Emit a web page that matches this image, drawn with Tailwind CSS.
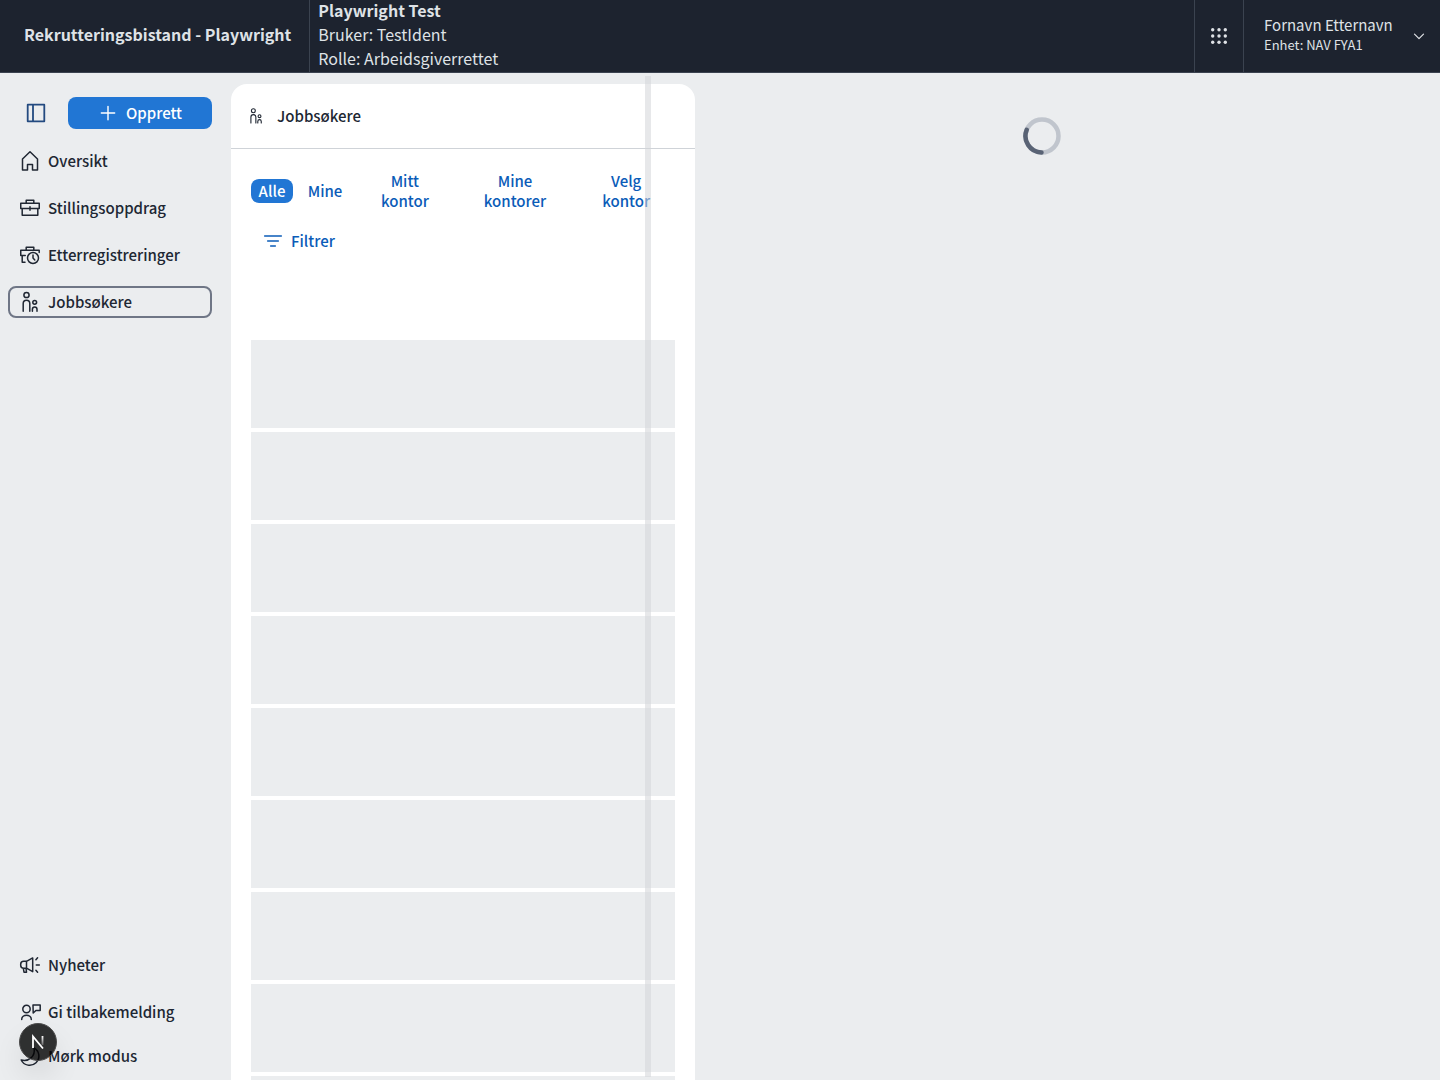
<!DOCTYPE html>
<html lang="nb">
<head>
<meta charset="utf-8">
<title>Rekrutteringsbistand</title>
<meta name="viewport" content="width=device-width, initial-scale=1">
<script src="https://cdn.jsdelivr.net/npm/@tailwindcss/browser@4"></script>
</head>
<body class="flex h-screen flex-col overflow-hidden bg-[#ebedef] font-['Noto_Sans_CJK_SC','Noto_Sans',sans-serif] text-[15px] leading-5 text-[#202733]">
<svg class="hidden">
  <defs>
    <symbol id="people" viewBox="0 0 24 24" fill="none" stroke="currentColor" stroke-width="1.5" stroke-linecap="round" stroke-linejoin="round">
      <circle cx="8.5" cy="5" r="2.6"/><path d="M5.2 21.200V13.500a3.300 3.300 0 0 1 6.600 0v7.700"/><circle cx="16.700" cy="12.300" r="1.900"/><path d="M14.400 21.200v-2a2.300 2.300 0 0 1 4.600 0v2"/>
    </symbol>
  </defs>
</svg>

<header class="flex h-[73px] shrink-0 border-b border-[#3b4350] bg-[#1d232f] text-[#dfe2e6]">
  <a href="#" class="flex items-center border-r border-[#3b4350] pr-[18px] pb-1 pl-6 text-[16px] leading-6 font-bold">Rekrutteringsbistand - Playwright</a>
  <div class="pl-2 text-[16px] leading-6">
    <p class="-mt-[2px] font-bold">Playwright Test</p>
    <p>Bruker: TestIdent</p>
    <p>Rolle: Arbeidsgiverrettet</p>
  </div>
  <button aria-label="Systemer" class="ml-auto flex w-[50px] items-center justify-center border-x border-[#3b4350]">
    <svg class="size-6" viewBox="0 0 24 24" fill="currentColor"><circle cx="5.7" cy="5.7" r="1.7"/><circle cx="12" cy="5.7" r="1.7"/><circle cx="18.3" cy="5.7" r="1.7"/><circle cx="5.7" cy="12" r="1.7"/><circle cx="12" cy="12" r="1.7"/><circle cx="18.3" cy="12" r="1.7"/><circle cx="5.7" cy="18.3" r="1.7"/><circle cx="12" cy="18.3" r="1.7"/><circle cx="18.3" cy="18.3" r="1.7"/></svg>
  </button>
  <button class="flex w-[196px] items-center justify-between pr-3 pl-5 text-left">
    <span class="pb-[2px]"><span class="block text-[15px] leading-5">Fornavn Etternavn</span><span class="block text-[13px] leading-5">Enhet: NAV FYA1</span></span>
    <svg class="size-[18px]" viewBox="0 0 24 24" fill="none" stroke="currentColor" stroke-width="1.6" stroke-linecap="round" stroke-linejoin="round"><path d="m6 9.5 6 6 6-6"/></svg>
  </button>
</header>

<div class="flex min-h-0 flex-1">
  <nav class="flex w-[231px] shrink-0 flex-col pt-6 pr-[19px] pb-2 pl-2 font-medium">
    <div class="mb-4 flex h-8 items-center justify-between pl-4">
      <button aria-label="Skjul meny" class="text-[#234a80]">
        <svg class="size-6" viewBox="0 0 24 24" fill="none" stroke="currentColor" stroke-width="1.8" stroke-linejoin="round"><path d="M3.7 3.7h16.6v16.6H3.7zM9 3.7v16.6"/></svg>
      </button>
      <button class="flex h-8 w-36 items-center justify-center gap-2 rounded-lg bg-[#2176d4] text-white">
        <svg class="size-5" viewBox="0 0 24 24" fill="none" stroke="currentColor" stroke-width="1.7" stroke-linecap="round"><path d="M12 4v16M4 12h16"/></svg>Opprett
      </button>
    </div>
    <ul class="flex flex-col gap-[15px]">
      <li><a href="#" class="flex h-8 items-center gap-[6px] pl-[10px]">
        <svg class="size-6" viewBox="0 0 24 24" fill="none" stroke="currentColor" stroke-width="1.5" stroke-linejoin="round"><path d="M12 2.8 4.5 10v11h5v-5.5h5V21h5V10z"/></svg>Oversikt</a></li>
      <li><a href="#" class="flex h-8 items-center gap-[6px] pl-[10px]">
        <svg class="size-6" viewBox="0 0 24 24" fill="none" stroke="currentColor" stroke-width="1.5" stroke-linejoin="round" stroke-linecap="round"><path d="M2.75 7.2h18.5v5.3H2.75zM4.2 12.5v6.8h15.6v-6.8M8.2 7V4.3h7.6V7M12 10.7v3.6"/></svg>Stillingsoppdrag</a></li>
      <li><a href="#" class="flex h-8 items-center gap-[6px] pl-[10px]">
        <svg class="size-6" viewBox="0 0 24 24" fill="none" stroke="currentColor" stroke-width="1.5" stroke-linejoin="round" stroke-linecap="round"><path d="M21.2 9.5V7.2H2.75v5.3h4.5M4.2 12.5v6.8H7M8.2 7V4.3h7.6V7"/><circle cx="15" cy="15" r="5.5"/><path d="M15 12v3l1.8 2"/></svg>Etterregistreringer</a></li>
      <li><a href="#" aria-current="page" class="flex h-8 items-center gap-[6px] rounded-lg border-2 border-[#6f7686] pl-2">
        <svg class="size-6"><use href="#people"/></svg>Jobbsøkere</a></li>
    </ul>
    <ul class="mt-auto">
      <li><a href="#" class="flex h-8 items-center gap-[6px] pl-[10px]">
        <svg class="size-6" viewBox="0 0 24 24" fill="none" stroke="currentColor" stroke-width="1.5" stroke-linejoin="round" stroke-linecap="round"><path d="M8.5 8.3H5.7a3 3 0 0 0-3 3v.9a3 3 0 0 0 3 3h2.8l6.2 3.4V4.9zM8.5 8.3v6.9M5.3 15.2l.7 4h2.5l-.5-4M17.9 6.8l1.7-2M18.3 12h3M17.9 17.2l1.7 2"/></svg>Nyheter</a></li>
      <li class="mt-[15px]"><a href="#" class="flex h-8 items-center gap-[6px] pl-[10px]">
        <svg class="size-6" viewBox="0 0 24 24" fill="none" stroke="currentColor" stroke-width="1.5" stroke-linejoin="round" stroke-linecap="round"><circle cx="8.5" cy="9" r="3.7"/><path d="M3.7 19.5c0-5.8 9.6-5.8 9.6 0M15 5h7.2v5.5h-4.3L15.2 13z"/></svg>Gi tilbakemelding</a></li>
      <li class="mt-3"><button class="flex h-8 w-full items-center gap-[6px] pl-[10px]">
        <svg class="size-6" viewBox="0 0 24 24" fill="none" stroke="currentColor" stroke-width="1.5" stroke-linejoin="round" stroke-linecap="round"><path d="M16 3.800a9.300 9.300 0 1 1-12.800 12.200c7.500 2 14.500-3.500 12.800-12.200z"/></svg>Mørk modus</button></li>
    </ul>
  </nav>

  <main class="grid min-w-0 flex-1 grid-cols-[464fr_745fr] grid-rows-[minmax(0,1fr)]">
    <section class="relative mt-[11px] flex min-h-0 min-w-0 flex-col rounded-t-2xl bg-white">
      <h1 class="flex h-[65px] shrink-0 items-center gap-3 border-b border-[#cfd3d8] pl-4 font-medium"><svg class="size-[18px]"><use href="#people"/></svg>Jobbsøkere</h1>
      <div class="min-h-0 flex-1 overflow-hidden px-5 pt-[22px] font-medium text-[#0b5cb8]">
        <div class="flex items-center gap-2">
          <button class="h-6 w-[42px] rounded-lg bg-[#2176d4] text-white">Alle</button>
          <button class="h-6 w-12">Mine</button>
          <button class="flex-[96]">Mitt<br>kontor</button>
          <button class="flex-[109]">Mine<br>kontorer</button>
          <button class="flex-[98]">Velg<br>kontor</button>
        </div>
        <button class="mt-[14px] flex h-8 items-center gap-[6px] pl-[10px]">
          <svg class="size-6" viewBox="0 0 24 24" fill="none" stroke="currentColor" stroke-width="1.6" stroke-linecap="round"><path d="M3.7 7h16.6M6.700 12h10.600M9.700 17h4.600"/></svg>Filtrer
        </button>
        <div aria-busy="true" class="mt-[83px] flex flex-col gap-1">
          <div class="h-[88px] bg-[#ebedef]"></div><div class="h-[88px] bg-[#ebedef]"></div><div class="h-[88px] bg-[#ebedef]"></div>
          <div class="h-[88px] bg-[#ebedef]"></div><div class="h-[88px] bg-[#ebedef]"></div><div class="h-[88px] bg-[#ebedef]"></div>
          <div class="h-[88px] bg-[#ebedef]"></div><div class="h-[88px] bg-[#ebedef]"></div><div class="h-[88px] bg-[#ebedef]"></div>
        </div>
      </div>
      <div class="absolute -top-2 right-11 bottom-[3px] w-[6px] bg-[#d4d6d9]/55"></div>
    </section>
    <section class="flex justify-center pt-[43px] pr-[51px]">
      <svg role="img" aria-label="Venter" class="size-10" viewBox="0 0 40 40" fill="none" stroke-width="4.500"><circle cx="20" cy="20" r="16.500" stroke="#c0c5cd"/><path d="M4.700 13.800A16.500 16.500 0 0 0 19.500 36.500" stroke="#596375" stroke-linecap="round"/></svg>
    </section>
  </main>
</div>

<button aria-label="Open Next.js Dev Tools" class="fixed bottom-[19px] left-[19px] flex size-[38px] items-center justify-center rounded-full border border-[#4a4a4a] bg-black/80 shadow-[0_16px_32px_-8px_rgba(0,0,0,0.24)]">
  <svg class="size-5" viewBox="0 0 20 20" fill="none" stroke-width="1.8"><defs><linearGradient id="fade" x1="0" y1="4" x2="0" y2="16" gradientUnits="userSpaceOnUse"><stop stop-color="white"/><stop offset="1" stop-color="white" stop-opacity="0"/></linearGradient></defs><path d="M5 16V4.500l10 12" stroke="white"/><path d="M14.500 4v9" stroke="url(#fade)"/></svg>
</button>
</body>
</html>
